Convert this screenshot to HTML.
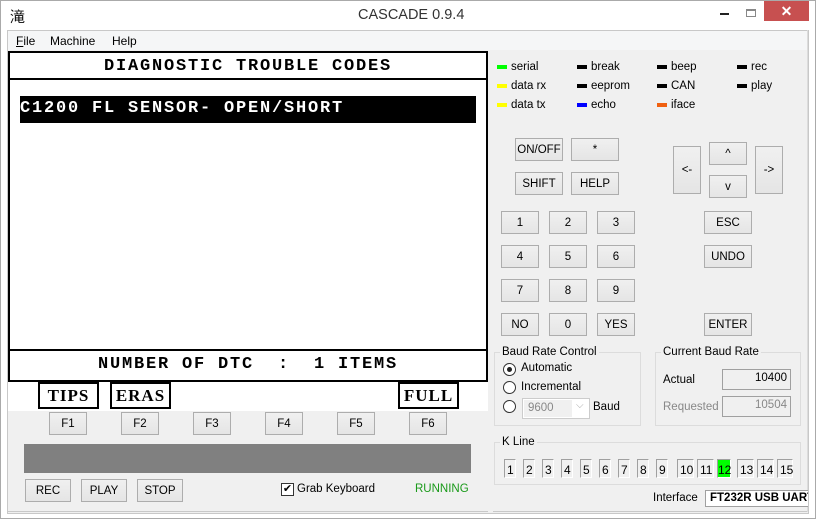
<!DOCTYPE html><html><head><meta charset="utf-8"><style>
*{box-sizing:border-box;margin:0;padding:0}
body{width:816px;height:519px;position:relative;background:#fff;font-family:"Liberation Sans","Noto Sans CJK SC",sans-serif;font-size:12px;color:#000;overflow:hidden}
.a{position:absolute}
.btn{position:absolute;background:linear-gradient(#f0f0f0,#e5e5e5);border:1px solid #adadad;text-align:center;font-size:11.5px;display:flex;align-items:center;justify-content:center}
.mono{font-family:"Liberation Mono","DejaVu Sans Mono",monospace;font-weight:bold;letter-spacing:1.8px}
.led{position:absolute;width:10px;height:4px}
.lt{position:absolute;font-size:11.5px}
.grp{position:absolute;border:1px solid #dcdcdc}
.gl{position:absolute;background:#f0f0f0;padding:0 2px;font-size:11.5px}
.k{position:absolute;top:459px;height:19px;border:1px solid #fff;border-left-color:#a0a0a0;border-top-color:#a0a0a0;font-size:12px;padding-left:2px;line-height:20px}
</style></head><body>
<div class="a" style="left:0;top:0;width:816px;height:519px;border:1px solid #aaa;background:#fff"></div>
<div class="a" style="left:10px;top:6px;font-size:15px">滝</div>
<div class="a" style="left:358px;top:7px;font-size:14.5px;color:#333">CASCADE 0.9.4</div>
<div class="a" style="left:720px;top:13px;width:9px;height:2px;background:#222"></div>
<div class="a" style="left:746px;top:9px;width:10px;height:8px;border:1px solid #888;border-top-width:2px"></div>
<div class="a" style="left:764px;top:1px;width:45px;height:20px;background:#c75050;color:#fff;text-align:center;font-size:14px;line-height:20px;font-weight:bold">✕</div>
<div class="a" style="left:7px;top:30px;width:802px;height:484px;background:#f0f0f0;border:1px solid #c8c8c8"></div>
<div class="a" style="left:8px;top:31px;width:800px;height:19px;background:#f5f6f7"></div>
<div class="a" style="left:16px;top:34px"><u>F</u>ile</div>
<div class="a" style="left:50px;top:34px">Machine</div>
<div class="a" style="left:112px;top:34px">Help</div>
<!-- screen -->
<div class="a" style="left:8px;top:51px;width:480px;height:360px;background:#fff"></div>
<div class="a" style="left:8px;top:51px;width:480px;height:331px;border:2px solid #000"></div>
<div class="a" style="left:8px;top:78px;width:480px;height:2px;background:#000"></div>
<div class="a" style="left:8px;top:349px;width:480px;height:2px;background:#000"></div>
<div class="a mono" style="left:8px;top:57px;width:480px;text-align:center;font-size:17px">DIAGNOSTIC TROUBLE CODES</div>
<div class="a" style="left:20px;top:96px;width:456px;height:27px;background:#000"></div>
<div class="a mono" style="left:20px;top:99px;color:#fff;font-size:17px">C1200 FL SENSOR- OPEN/SHORT</div>
<div class="a mono" style="left:8px;top:355px;width:480px;text-align:center;font-size:17px">NUMBER OF DTC &nbsp;: &nbsp;1 ITEMS</div>
<div class="a mono" style="left:38px;top:382px;width:61px;height:27px;border:2px solid #000;font-size:17px;text-align:center;line-height:23px;font-family:'Liberation Serif',serif;letter-spacing:1px">TIPS</div>
<div class="a mono" style="left:110px;top:382px;width:61px;height:27px;border:2px solid #000;font-size:17px;text-align:center;line-height:23px;font-family:'Liberation Serif',serif;letter-spacing:1px">ERAS</div>
<div class="a mono" style="left:398px;top:382px;width:61px;height:27px;border:2px solid #000;font-size:17px;text-align:center;line-height:23px;font-family:'Liberation Serif',serif;letter-spacing:1px">FULL</div>
<div class="btn" style="left:49px;top:412px;width:38px;height:23px">F1</div>
<div class="btn" style="left:121px;top:412px;width:38px;height:23px">F2</div>
<div class="btn" style="left:193px;top:412px;width:38px;height:23px">F3</div>
<div class="btn" style="left:265px;top:412px;width:38px;height:23px">F4</div>
<div class="btn" style="left:337px;top:412px;width:38px;height:23px">F5</div>
<div class="btn" style="left:409px;top:412px;width:38px;height:23px">F6</div>
<div class="a" style="left:24px;top:444px;width:447px;height:29px;background:#808080"></div>
<div class="btn" style="left:25px;top:479px;width:46px;height:23px">REC</div>
<div class="btn" style="left:81px;top:479px;width:46px;height:23px">PLAY</div>
<div class="btn" style="left:137px;top:479px;width:46px;height:23px">STOP</div>
<div class="a" style="left:281px;top:483px;width:13px;height:13px;border:1px solid #333;background:#fff;font-size:11px;line-height:11px;text-align:center">✔</div>
<div class="a" style="left:297px;top:483px;font-size:11.5px">Grab Keyboard</div>
<div class="a" style="left:415px;top:483px;font-size:11.5px;color:#1a9a1a">RUNNING</div>
<div class="a" style="left:7px;top:511px;width:481px;height:1px;background:#c8c8c8"></div>
<div class="a" style="left:493px;top:511px;width:316px;height:1px;background:#c8c8c8"></div>
<div class="a" style="left:807px;top:30px;width:1px;height:482px;background:#dcdcdc"></div>
<!-- LEDs -->
<div class="led" style="left:497px;top:65px;background:#00ff00"></div><div class="lt" style="left:511px;top:61px">serial</div>
<div class="led" style="left:497px;top:84px;background:#ffff00"></div><div class="lt" style="left:511px;top:80px">data rx</div>
<div class="led" style="left:497px;top:103px;background:#ffff00"></div><div class="lt" style="left:511px;top:99px">data tx</div>
<div class="led" style="left:577px;top:65px;background:#000"></div><div class="lt" style="left:591px;top:61px">break</div>
<div class="led" style="left:577px;top:84px;background:#000"></div><div class="lt" style="left:591px;top:80px">eeprom</div>
<div class="led" style="left:577px;top:103px;background:#0000ff"></div><div class="lt" style="left:591px;top:99px">echo</div>
<div class="led" style="left:657px;top:65px;background:#000"></div><div class="lt" style="left:671px;top:61px">beep</div>
<div class="led" style="left:657px;top:84px;background:#000"></div><div class="lt" style="left:671px;top:80px">CAN</div>
<div class="led" style="left:657px;top:103px;background:#f06010"></div><div class="lt" style="left:671px;top:99px">iface</div>
<div class="led" style="left:737px;top:65px;background:#000"></div><div class="lt" style="left:751px;top:61px">rec</div>
<div class="led" style="left:737px;top:84px;background:#000"></div><div class="lt" style="left:751px;top:80px">play</div>
<!-- buttons -->
<div class="btn" style="left:515px;top:138px;width:48px;height:23px">ON/OFF</div>
<div class="btn" style="left:571px;top:138px;width:48px;height:23px">*</div>
<div class="btn" style="left:515px;top:172px;width:48px;height:23px">SHIFT</div>
<div class="btn" style="left:571px;top:172px;width:48px;height:23px">HELP</div>
<div class="btn" style="left:673px;top:146px;width:28px;height:48px">&lt;-</div>
<div class="btn" style="left:709px;top:142px;width:38px;height:23px">^</div>
<div class="btn" style="left:709px;top:175px;width:38px;height:23px">v</div>
<div class="btn" style="left:755px;top:146px;width:28px;height:48px">-&gt;</div>
<div class="btn" style="left:501px;top:211px;width:38px;height:23px">1</div>
<div class="btn" style="left:549px;top:211px;width:38px;height:23px">2</div>
<div class="btn" style="left:597px;top:211px;width:38px;height:23px">3</div>
<div class="btn" style="left:501px;top:245px;width:38px;height:23px">4</div>
<div class="btn" style="left:549px;top:245px;width:38px;height:23px">5</div>
<div class="btn" style="left:597px;top:245px;width:38px;height:23px">6</div>
<div class="btn" style="left:501px;top:279px;width:38px;height:23px">7</div>
<div class="btn" style="left:549px;top:279px;width:38px;height:23px">8</div>
<div class="btn" style="left:597px;top:279px;width:38px;height:23px">9</div>
<div class="btn" style="left:501px;top:313px;width:38px;height:23px">NO</div>
<div class="btn" style="left:549px;top:313px;width:38px;height:23px">0</div>
<div class="btn" style="left:597px;top:313px;width:38px;height:23px">YES</div>
<div class="btn" style="left:704px;top:211px;width:48px;height:23px">ESC</div>
<div class="btn" style="left:704px;top:245px;width:48px;height:23px">UNDO</div>
<div class="btn" style="left:704px;top:313px;width:48px;height:23px">ENTER</div>
<!-- baud -->
<div class="grp" style="left:494px;top:352px;width:147px;height:74px"></div>
<div class="gl" style="left:500px;top:346px">Baud Rate Control</div>
<div class="a" style="left:503px;top:363px;width:13px;height:13px;border:1px solid #333;border-radius:50%;background:#fff"><div class="a" style="left:3px;top:3px;width:5px;height:5px;border-radius:50%;background:#222"></div></div>
<div class="lt" style="left:521px;top:362px">Automatic</div>
<div class="a" style="left:503px;top:381px;width:13px;height:13px;border:1px solid #333;border-radius:50%;background:#fff"></div>
<div class="lt" style="left:521px;top:381px">Incremental</div>
<div class="a" style="left:503px;top:400px;width:13px;height:13px;border:1px solid #333;border-radius:50%;background:#fff"></div>
<div class="a" style="left:522px;top:398px;width:68px;height:21px;border:1px solid #ccc;background:#fff"><div class="a" style="left:1px;top:1px;width:48px;height:17px;background:#f0f0f0;color:#888;font-size:11.5px;padding:2px 0 0 4px">9600</div><div class="a" style="left:53px;top:1px;color:#aaa;font-size:10px">⌵</div></div>
<div class="lt" style="left:593px;top:401px">Baud</div>
<div class="grp" style="left:655px;top:352px;width:146px;height:74px"></div>
<div class="gl" style="left:661px;top:346px">Current Baud Rate</div>
<div class="lt" style="left:663px;top:374px">Actual</div>
<div class="a" style="left:722px;top:369px;width:69px;height:21px;border:1px solid #a0a0a0;background:#f0f0f0;text-align:right;padding:2px 3px;font-size:11.5px">10400</div>
<div class="lt" style="left:663px;top:401px;color:#888">Requested</div>
<div class="a" style="left:722px;top:396px;width:69px;height:21px;border:1px solid #a0a0a0;background:#f0f0f0;text-align:right;padding:2px 3px;font-size:11.5px;color:#888">10504</div>
<!-- K line -->
<div class="grp" style="left:494px;top:442px;width:307px;height:43px"></div>
<div class="gl" style="left:500px;top:436px">K Line</div>
<div class="k" style="left:504px;width:12px">1</div>
<div class="k" style="left:523px;width:12px">2</div>
<div class="k" style="left:542px;width:12px">3</div>
<div class="k" style="left:561px;width:12px">4</div>
<div class="k" style="left:580px;width:12px">5</div>
<div class="k" style="left:599px;width:12px">6</div>
<div class="k" style="left:618px;width:12px">7</div>
<div class="k" style="left:637px;width:12px">8</div>
<div class="k" style="left:656px;width:12px">9</div>
<div class="k" style="left:677px;width:17px">10</div>
<div class="k" style="left:697px;width:17px">11</div>
<div class="k" style="left:717px;width:14px;background:#00ff00;padding-left:0">12</div>
<div class="k" style="left:737px;width:17px">13</div>
<div class="k" style="left:757px;width:17px">14</div>
<div class="k" style="left:777px;width:16px">15</div>
<div class="lt" style="left:653px;top:492px">Interface</div>
<div class="a" style="left:705px;top:490px;width:103px;height:17px;border:1px solid #a0a0a0;border-right:none;background:#fff;font-weight:bold;font-size:11.5px;padding:1px 0 0 4px;white-space:nowrap;overflow:hidden">FT232R USB UART</div>
</body></html>
